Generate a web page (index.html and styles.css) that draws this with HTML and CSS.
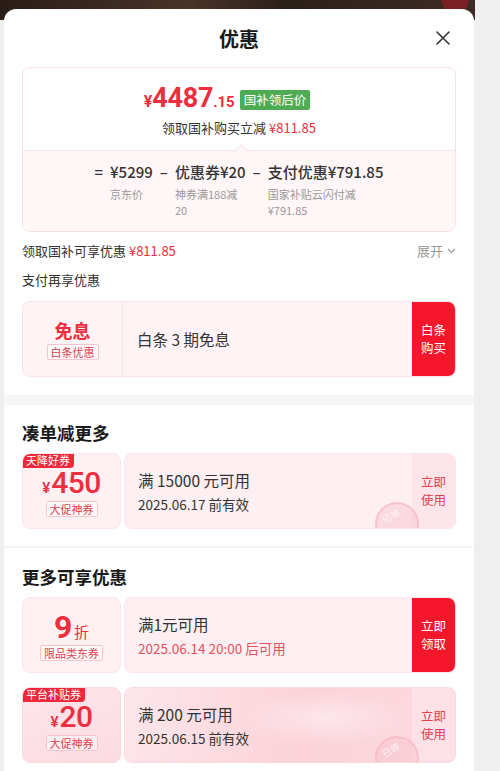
FILE: index.html
```html
<!DOCTYPE html>
<html lang="zh-CN">
<head>
<meta charset="utf-8">
<title>优惠</title>
<link rel="stylesheet" href="styles.css">
</head>
<body>
<div class="screen">
  <div class="sheet">
    <div class="head">
      <span></span>
      <div class="title">优惠</div>
      <svg class="close" viewBox="0 0 14 14" width="14" height="14"><path d="M1 1L13 13M13 1L1 13" stroke="#333" stroke-width="1.6" stroke-linecap="round" fill="none"/></svg>
    </div>

    <div class="section">
      <div class="pcard">
        <div class="ptop">
          <div class="prow">
            <span class="price"><span class="yen">¥</span><span class="int">4487</span><span class="dec">.15</span></span>
            <span class="gtag">国补领后价</span>
          </div>
          <div class="psub">领取国补购买立减 <span class="red">¥811.85</span></div>
        </div>
        <div class="pbottom">
          <div class="formula">
            <span class="op">=</span>
            <span class="term">¥5299</span>
            <span class="op">–</span>
            <span class="term">优惠券¥20</span>
            <span class="op">–</span>
            <span class="term">支付优惠¥791.85</span>
            <span></span>
            <span class="lbl">京东价</span>
            <span></span>
            <span class="lbl">神券满188减20</span>
            <span></span>
            <span class="lbl">国家补贴云闪付减¥791.85</span>
          </div>
        </div>
      </div>

      <div class="line">
        <span>领取国补可享优惠 <span class="red">¥811.85</span></span>
        <span class="more">展开 <svg viewBox="0 0 9 6" width="9" height="6"><path d="M1 1L4.5 4.5L8 1" stroke="#999" stroke-width="1.2" fill="none"/></svg></span>
      </div>
      <div class="line sub">支付再享优惠</div>

      <div class="bcard">
        <div class="bleft">
          <div class="bbig">免息</div>
          <div class="otag">白条优惠</div>
        </div>
        <div class="bmid">白条 3 期免息</div>
        <div class="bbtn">白条<br>购买</div>
      </div>
    </div>

    <div class="band"></div>

    <div class="section">
      <h2 class="h2">凑单减更多</h2>
      <div class="coupon">
        <div class="cleft">
          <span class="badge">天降好券</span>
          <div class="cprice"><span class="cyen">¥</span><span class="cnum">450</span></div>
          <div class="otag">大促神券</div>
        </div>
        <div class="cright">
          <div class="cinfo">
            <div class="cmain">满 15000 元可用</div>
            <div class="cdate">2025.06.17 前有效</div>
          </div>
          <div class="cact">立即<br>使用</div>
          <div class="stamp"><span>已领</span></div>
        </div>
      </div>
    </div>

    <div class="thin"></div>

    <div class="section">
      <h2 class="h2 h2b">更多可享优惠</h2>
      <div class="coupon">
        <div class="cleft">
          <div class="cprice"><span class="cnum big">9</span><span class="czhe">折</span></div>
          <div class="otag">限品类东券</div>
        </div>
        <div class="cright">
          <div class="cinfo">
            <div class="cmain">满1元可用</div>
            <div class="cdate hot">2025.06.14 20:00 后可用</div>
          </div>
          <div class="cact solid">立即<br>领取</div>
        </div>
      </div>

      <div class="coupon c3">
        <div class="cleft">
          <span class="badge">平台补贴券</span>
          <div class="cprice"><span class="cyen">¥</span><span class="cnum">20</span></div>
          <div class="otag">大促神券</div>
        </div>
        <div class="cright">
          <div class="cinfo">
            <div class="cmain">满 200 元可用</div>
            <div class="cdate">2025.06.15 前有效</div>
          </div>
          <div class="cact">立即<br>使用</div>
          <div class="stamp"><span>已领</span></div>
        </div>
      </div>
    </div>
  </div>
</div>
</body>
</html>
```

FILE: styles.css
```css
* { box-sizing: border-box; }
html, body { margin: 0; padding: 0; }
body {
  width: 500px;
  height: 771px;
  overflow: hidden;
  background: #efefef;
  font-family: "Noto Sans CJK SC", "Noto Sans", sans-serif;
  color: #333;
}
.screen {
  width: 475px;
  height: 771px;
  padding-top: 9px;
  background:
    radial-gradient(circle at 455px 0px, #7a1f22 0 13px, transparent 14px),
    linear-gradient(to right, #2a1d18 0, #4a3328 40%, #2c201b 60%, #3d2c24 100%) top / 100% 20px no-repeat,
    #efefef;
}
.sheet {
  margin-left: 4px;
  width: 470px;
  height: 762px;
  background: #fff;
  border-radius: 12px 12px 0 0;
  overflow: hidden;
}
.head {
  display: grid;
  grid-template-columns: 1fr auto 1fr;
  align-items: center;
  height: 58px;
  padding: 0 18px;
}
.title {
  font-size: 20px;
  font-weight: 700;
  color: #1a1a1a;
}
.close { justify-self: end; margin-right: 6px; }
.section { padding: 0 18px; }
.red { color: #ec2e3e; }

.pcard {
  border: 1px solid #f8e0e4;
  border-radius: 8px;
  overflow: hidden;
}
.ptop { padding: 18px 0 13px; text-align: center; }
.prow {
  display: flex;
  justify-content: center;
  align-items: center;
  gap: 5px;
  height: 28px;
  padding-right: 24px;
}
.price {
  color: #ec2e3e;
  font-family: Roboto, "Noto Sans", sans-serif;
  font-weight: 700;
  line-height: 28px;
  white-space: nowrap;
}
.yen { font-size: 16px; }
.int { font-size: 27px; letter-spacing: -0.3px; }
.dec { font-size: 15px; }
.gtag {
  background: #4eaa53;
  color: #fff;
  font-size: 12.5px;
  line-height: 20px;
  padding: 0 4px;
  border-radius: 2px;
}
.psub {
  margin-top: 5px;
  font-size: 13px;
  line-height: 18px;
  color: #333;
}
.pbottom {
  position: relative;
  background: #fff6f7;
  border-top: 1px solid #fae3e6;
  padding: 11px 0 13px;
}
.pbottom::before {
  content: "";
  position: absolute;
  top: -5px;
  left: 214px;
  width: 8px;
  height: 8px;
  background: #fff6f7;
  border-top: 1px solid #fae3e6;
  border-left: 1px solid #fae3e6;
  transform: rotate(45deg);
}
.formula {
  display: grid;
  grid-template-columns: repeat(6, auto);
  justify-content: center;
  column-gap: 7px;
  row-gap: 5px;
}
.op, .term {
  font-size: 15px;
  line-height: 20px;
  font-weight: 500;
  color: #333;
}
.lbl {
  width: 0;
  min-width: 100%;
  font-size: 11px;
  line-height: 15.5px;
  color: #999;
}
.line {
  display: flex;
  justify-content: space-between;
  align-items: center;
  margin-top: 9px;
  font-size: 13px;
  line-height: 20px;
  color: #333;
}
.more { color: #999; display: flex; align-items: center; gap: 4px; }

.bcard {
  display: flex;
  height: 76px;
  margin-top: 11px;
  border: 1px solid #fae3e7;
  border-radius: 8px;
  background: #fff3f5;
  overflow: hidden;
}
.bleft {
  width: 100px;
  border-right: 1px solid #fae6ea;
  display: flex;
  flex-direction: column;
  align-items: center;
  justify-content: center;
}
.bbig {
  font-size: 18px;
  font-weight: 700;
  line-height: 24px;
  color: #ec2e3e;
}
.otag {
  margin-top: 2px;
  font-size: 11px;
  line-height: 14px;
  padding: 0 3px;
  color: #e0404e;
  border: 1px solid #f6c6cd;
  border-radius: 2px;
  background: rgba(255,255,255,0.5);
}
.bmid {
  flex: 1;
  display: flex;
  align-items: center;
  padding-left: 14px;
  font-size: 15.5px;
  color: #333;
}
.bbtn {
  width: 43px;
  background: #f5162c;
  color: #fff;
  font-size: 12.5px;
  line-height: 18.5px;
  display: flex;
  align-items: center;
  justify-content: center;
  text-align: center;
}
.band {
  height: 10px;
  margin-top: 18px;
  background: #f6f6f8;
}
.thin {
  height: 2px;
  margin-top: 17px;
  background: #f6f6f6;
}
.h2 {
  margin: 17px 0 0;
  font-size: 17.5px;
  line-height: 22px;
  font-weight: 700;
  color: #1a1a1a;
}
.h2b { margin-top: 18px; }
.coupon {
  display: flex;
  gap: 3px;
  height: 76px;
  margin-top: 9px;
}
.coupon.c3 { margin-top: 14px; }
.cleft {
  position: relative;
  width: 99px;
  border: 1px solid #fbe5e9;
  border-radius: 8px;
  background: #fff0f2;
  display: flex;
  flex-direction: column;
  align-items: center;
  justify-content: center;
  padding-top: 2px;
  overflow: hidden;
}
.badge {
  position: absolute;
  top: -1px;
  left: -1px;
  background: #f0283c;
  color: #fff;
  font-size: 11px;
  line-height: 15px;
  padding: 0 4px;
  border-radius: 8px 0 4px 0;
}
.cprice {
  color: #ec2e3e;
  font-family: Roboto, "Noto Sans", sans-serif;
  line-height: 32px;
  height: 32px;
  white-space: nowrap;
}
.cyen { font-size: 15px; font-weight: 500; margin-right: 1px; }
.cnum { font-size: 30px; font-weight: 500; letter-spacing: -0.5px; }
.cnum.big { font-size: 32px; font-weight: 700; }
.czhe { font-size: 15px; font-family: "Noto Sans CJK SC", sans-serif; margin-left: 2px; }
.cprice + .otag { margin-top: 2px; }
.cright {
  position: relative;
  flex: 1;
  display: flex;
  border: 1px solid #fbe5e9;
  border-radius: 8px;
  background: #fdeff2;
  overflow: hidden;
}
.cinfo {
  flex: 1;
  display: flex;
  flex-direction: column;
  justify-content: center;
  gap: 3px;
  padding: 1px 0 0 13px;
}
.cmain { font-size: 15.5px; line-height: 22px; color: #333; }
.cdate { font-size: 13.5px; line-height: 20px; color: #333; }
.cdate.hot { color: #e5525e; }
.cact {
  width: 43px;
  background: #fde5ea;
  color: #e2404d;
  font-size: 12.5px;
  line-height: 18.5px;
  display: flex;
  align-items: center;
  justify-content: center;
  text-align: center;
  position: relative;
  z-index: 1;
}
.cact.solid { background: #f5162c; color: #fff; }
.stamp {
  position: absolute;
  left: 250px;
  top: 48px;
  width: 44px;
  height: 44px;
  border-radius: 50%;
  border: 2px solid rgba(246, 185, 196, 0.75);
  background: rgba(248, 196, 205, 0.5);
  display: flex;
  justify-content: center;
  padding-top: 6px;
  z-index: 2;
}
.stamp span {
  font-size: 9px;
  line-height: 10px;
  color: rgba(255,255,255,0.85);
  transform: rotate(-30deg);
}
.c3 .cleft {
  background: linear-gradient(160deg, #fde6ea 0%, #fcdbe1 100%);
  border-color: #fad9df;
}
.c3 .cright {
  background:
    radial-gradient(ellipse 120px 40px at 200px 30px, rgba(255,255,255,0.45), transparent 70%),
    linear-gradient(100deg, #fde6ea 0%, #fbd2d9 55%, #fcdbe1 100%);
  border-color: #fad9df;
}
.c3 .cact { background: #fde1e6; }
```
